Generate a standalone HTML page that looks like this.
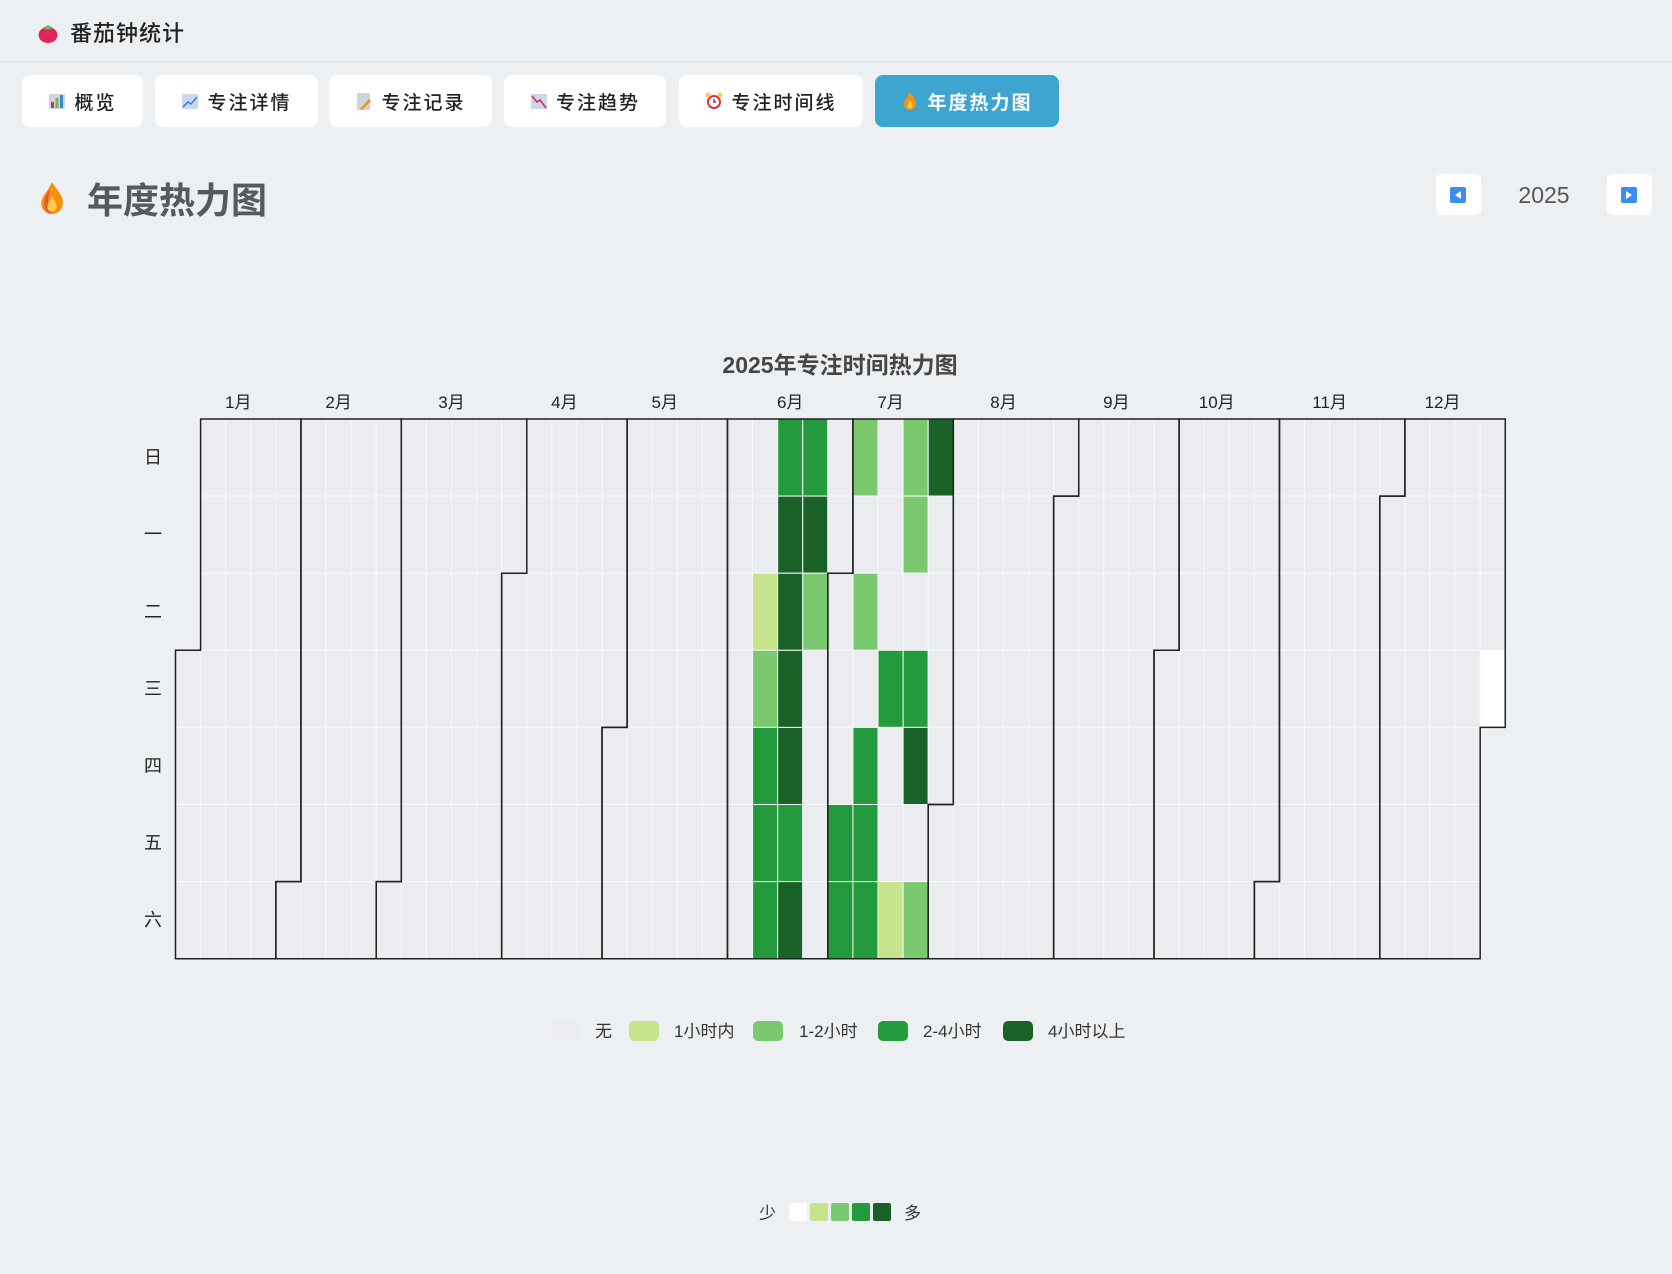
<!DOCTYPE html>
<html><head><meta charset="utf-8">
<style>
*{margin:0;padding:0;box-sizing:border-box}
body{width:1672px;height:1274px;background:#edf0f3;font-family:"Liberation Sans","Noto Sans CJK SC",sans-serif;position:relative;overflow:hidden;color:#333}
.hdr{position:absolute;left:0;top:0;width:1672px;height:62px;border-bottom:1px solid #dcdfe3}
.hdr span{position:absolute;left:70px;top:16px;font-size:22px;color:#222;font-family:"Noto Sans CJK SC",sans-serif;font-weight:500;letter-spacing:1px}
.tab{position:absolute;top:75px;height:52px;background:#fff;border-radius:8px;font-size:19px;color:#222;display:flex;align-items:center;justify-content:center;gap:8px;font-family:"Noto Sans CJK SC",sans-serif;font-weight:500;letter-spacing:2px}
.tab.act{background:#3ea4d0;color:#fff;font-weight:bold}
.ic{width:18px;height:20px;display:inline-block}
h1{position:absolute;left:87px;top:172px;font-size:36px;color:#555a5e;font-weight:bold}
.btn{position:absolute;top:174px;width:45px;height:41px;background:#fff;border-radius:6px}
.btn i{position:absolute;left:14px;top:13px;width:16px;height:16px;background:#3b8ef0;border-radius:2px}
.year{position:absolute;left:1500px;top:182px;width:88px;text-align:center;font-size:23px;color:#555}
</style></head><body>
<div class="hdr">
<svg style="position:absolute;left:37px;top:22px" width="22" height="22" viewBox="0 0 22 22"><ellipse cx="11" cy="13" rx="9.5" ry="8" fill="#e0245e"/><path d="M6 6 L11 3 L16 6 L11 8Z" fill="#77b255"/></svg>
<span>番茄钟统计</span></div>

<div class="tab" style="left:22px;width:121px"><svg class="ic" viewBox="0 0 18 20"><rect x="1" y="3" width="16" height="15" fill="#ccd6dd"/><rect x="3" y="11" width="3" height="6" fill="#dd2e44"/><rect x="7.5" y="7" width="3" height="10" fill="#77b255"/><rect x="12" y="4" width="3" height="13" fill="#3b88c3"/></svg>概览</div>
<div class="tab" style="left:155px;width:163px"><svg class="ic" viewBox="0 0 18 20"><rect x="1" y="3" width="16" height="15" fill="#ccd6f0"/><path d="M2 16 L7 11 L10 13 L16 6" stroke="#3b88c3" stroke-width="1.6" fill="none"/></svg>专注详情</div>
<div class="tab" style="left:329px;width:163px"><svg class="ic" viewBox="0 0 18 20"><rect x="2" y="2" width="13" height="17" fill="#ccd6dd"/><path d="M5 18 L14 8 L16 10 L7 19Z" fill="#f4900c"/></svg>专注记录</div>
<div class="tab" style="left:504px;width:162px"><svg class="ic" viewBox="0 0 18 20"><rect x="1" y="3" width="16" height="15" fill="#ccd6f0"/><path d="M2 5 L7 11 L10 9 L16 17" stroke="#dd2e44" stroke-width="1.6" fill="none"/></svg>专注趋势</div>
<div class="tab" style="left:679px;width:184px"><svg class="ic" viewBox="0 0 18 20"><circle cx="9" cy="11" r="7" fill="#dd2e44"/><circle cx="9" cy="11" r="5" fill="#fff"/><path d="M9 8 V11 H11" stroke="#333" stroke-width="1.2" fill="none"/><circle cx="3" cy="4" r="2.5" fill="#ffcc4d"/><circle cx="15" cy="4" r="2.5" fill="#ffcc4d"/></svg>专注时间线</div>
<div class="tab act" style="left:875px;width:184px"><svg class="ic" viewBox="0 0 18 20"><path d="M9 1 C12 6 16 9 15 14 C14 18 11 19 9 19 C6 19 3 17 3 13 C3 9 7 6 9 1Z" fill="#f4900c"/><path d="M9 9 C11 12 12 14 11.5 16 C11 18 7 18 6.5 16 C6 14 8 12 9 9Z" fill="#ffcc4d"/></svg>年度热力图</div>

<svg style="position:absolute;left:36px;top:178px" width="32" height="40" viewBox="0 0 18 20"><path d="M9 1 C12 6 16 9 15 14 C14 18 11 19 9 19 C6 19 3 17 3 13 C3 9 7 6 9 1Z" fill="#f4900c"/><path d="M8 5 C6 8 4 10 5 15 C5 17 7 19 9 19 C6 17 6 13 8 5Z" fill="#e8543a"/><path d="M9 9 C11 12 12 14 11.5 16 C11 18 7 18 6.5 16 C6 14 8 12 9 9Z" fill="#ffcc4d"/></svg>
<h1>年度热力图</h1>
<div class="btn" style="left:1436px"><i></i><svg style="position:absolute;left:17px;top:16px" width="10" height="10"><path d="M8 1 L2 5 L8 9Z" fill="#fff"/></svg></div>
<div class="year">2025</div>
<div class="btn" style="left:1607px"><i></i><svg style="position:absolute;left:17px;top:16px" width="10" height="10"><path d="M2 1 L8 5 L2 9Z" fill="#fff"/></svg></div>

<div style="position:absolute;left:0;top:346px;width:1680px;text-align:center;font-size:23px;font-weight:bold;color:#464646">2025年专注时间热力图</div>

<svg id="hm" style="position:absolute;left:0;top:0" width="1672" height="1274"></svg>

<script>
var L=175.5,T=419,W=25.09,H=77.1;
var s='';
var colors={1:'#c6e48b',2:'#7bc96f',3:'#239a3b',4:'#196127'};
var data={};
function set(c,r,v){data[c+','+r]=v;}
set(24,0,3);set(25,0,3);set(27,0,2);set(29,0,2);set(30,0,4);
set(24,1,4);set(25,1,4);set(29,1,2);
set(23,2,1);set(24,2,4);set(25,2,2);set(27,2,2);
set(23,3,2);set(24,3,4);set(28,3,3);set(29,3,3);
set(23,4,3);set(24,4,4);set(27,4,3);set(29,4,4);
set(23,5,3);set(24,5,3);set(26,5,3);set(27,5,3);
set(23,6,3);set(24,6,4);set(26,6,3);set(27,6,3);set(28,6,1);set(29,6,2);
function pos(d){var i=d+3;return [Math.floor(i/7),i%7];}
var md=[31,28,31,30,31,30,31,31,30,31,30,31];
for(var d=0;d<365;d++){var p=pos(d);var v=data[p[0]+','+p[1]];var f=v?colors[v]:'#ebecef';if(d==364)f='#ffffff';
s+='<rect x="'+(L+p[0]*W)+'" y="'+(T+p[1]*H)+'" width="'+W+'" height="'+H+'" fill="'+f+'" stroke="#f7f8fa" stroke-width="1"/>';}
var st=0;
function X(c){return L+c*W;}function Y(r){return T+r*H;}
for(var m=0;m<12;m++){var a=pos(st),b=pos(st+md[m]-1);var c1=a[0],r1=a[1],c2=b[0],r2=b[1];
s+='<path d="M'+X(c1)+' '+Y(7)+' L'+X(c1)+' '+Y(r1)+' L'+X(c1+1)+' '+Y(r1)+' L'+X(c1+1)+' '+Y(0)+' L'+X(c2+1)+' '+Y(0)+' L'+X(c2+1)+' '+Y(r2+1)+' L'+X(c2)+' '+Y(r2+1)+' L'+X(c2)+' '+Y(7)+'Z" fill="none" stroke="#222" stroke-width="1.5"/>';
var cx=(X(c1)+X(c2+1))/2;
s+='<text x="'+cx+'" y="408" text-anchor="middle" font-size="17" fill="#222" font-family="Liberation Sans,Noto Sans CJK SC,sans-serif">'+(m+1)+'月</text>';
st+=md[m];}
var dn=['日','一','二','三','四','五','六'];
for(var r=0;r<7;r++)s+='<text x="153" y="'+(T+r*H+H/2+6)+'" text-anchor="middle" font-size="18" fill="#222" font-family="Noto Sans CJK SC,sans-serif">'+dn[r]+'</text>';
var lg=[[551,'#ebecef',595,'无'],[629,'#c6e48b',674,'1小时内'],[753,'#7bc96f',799,'1-2小时'],[878,'#239a3b',923,'2-4小时'],[1003,'#196127',1048,'4小时以上']];
lg.forEach(function(o){s+='<rect x="'+o[0]+'" y="1021" width="30" height="20" rx="5" fill="'+o[1]+'"/><text x="'+o[2]+'" y="1037" font-size="17" fill="#333" font-family="Liberation Sans,Noto Sans CJK SC,sans-serif">'+o[3]+'</text>';});
s+='<text x="759" y="1219" font-size="17" fill="#333" font-family="Noto Sans CJK SC,sans-serif">少</text><text x="904" y="1219" font-size="17" fill="#333" font-family="Noto Sans CJK SC,sans-serif">多</text>';
['#ffffff','#c6e48b','#7bc96f','#239a3b','#196127'].forEach(function(c,i){s+='<rect x="'+(789+i*21)+'" y="1203" width="18" height="18" rx="2" fill="'+c+'"/>';});
document.getElementById('hm').innerHTML=s;
</script>
</body></html>
